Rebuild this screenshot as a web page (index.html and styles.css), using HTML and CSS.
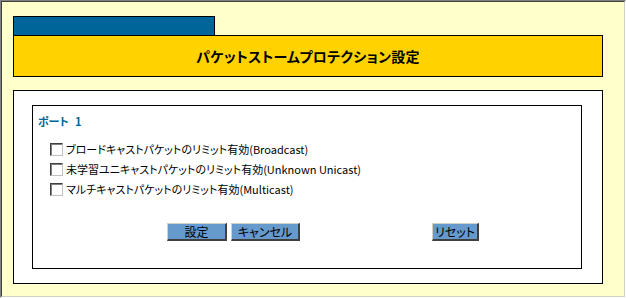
FILE: index.html
```html
<!DOCTYPE html>
<html lang="ja">

<head>
    <meta charset="UTF-8">
    <meta name="viewport" content="width=device-width, initial-scale=1.0">
    <title>パケットストームプロテクション設定</title>
    <link rel="stylesheet" href="styles.css">
</head>

<body>
    <div class="frame">
        <div class="page">
            <div class="tab"></div>
            <div class="header">
                <h1 class="title">パケットストームプロテクション設定</h1>
            </div>
            <form class="outer" id="form">
                <div class="inner">
                    <h3 class="port">ポート 1</h3>
                    <label class="row"><input type="checkbox" class="check" name="broadcast">
                        <span>ブロードキャストパケットのリミット有効(Broadcast)</span></label>
                    <label class="row"><input type="checkbox" class="check" name="unicast">
                        <span>未学習ユニキャストパケットのリミット有効(Unknown Unicast)</span></label>
                    <label class="row"><input type="checkbox" class="check" name="multicast">
                        <span>マルチキャストパケットのリミット有効(Multicast)</span></label>
                    <div class="buttons">
                        <button type="submit" class="btn btn-set">設定</button>
                        <button type="button" class="btn btn-cancel">キャンセル</button>
                        <button type="reset" class="btn btn-reset">リセット</button>
                    </div>
                </div>
            </form>
        </div>
    </div>
</body>

</html>
```

FILE: styles.css
```css
* {
    padding: 0;
    margin: 0;
    box-sizing: border-box;
}

body {
    background: #ffffcc;
    font-family: "Noto Sans CJK JP", "DejaVu Sans", sans-serif;
    font-feature-settings: "palt";
}

.frame {
    height: 298px;
    border-top: 1px solid #808080;
    border-left: 1px solid #808080;
    border-right: 1px solid #ffffff;
    border-bottom: 1px solid #ffffff;
}

.page {
    height: 100%;
    background: #ffffcc;
    border-top: 1px solid #404040;
    border-left: 1px solid #404040;
    border-right: 1px solid #d4d0c8;
    border-bottom: 1px solid #d4d0c8;
    padding: 14px 0 0 11px;
}

.tab {
    width: 202px;
    height: 19px;
    background: #006699;
    border: 1px solid #000;
    border-bottom: none;
}

.header {
    width: 590px;
    height: 42px;
    background: #ffd200;
    border: 1px solid #000;
    display: flex;
    align-items: center;
    justify-content: center;
}

.title {
    font-size: 14px;
    font-weight: bold;
    color: #000;
    line-height: 16px;
    letter-spacing: 0.3px;
}

.outer {
    display: block;
    width: 590px;
    height: 194px;
    margin-top: 13px;
    background: #fff;
    border: 1px solid #000;
    padding: 14px 0 0 18px;
}

.inner {
    width: 550px;
    height: 164px;
    border: 1px solid #000;
    padding: 7px 0 0 5px;
}

.port {
    font-size: 11px;
    font-weight: bold;
    color: #006699;
    line-height: 16px;
    word-spacing: 4px;
    margin-bottom: 10px;
}

.row {
    display: flex;
    align-items: center;
    height: 20px;
    font-size: 11px;
    color: #000;
    padding-left: 12px;
}

.check {
    appearance: none;
    width: 13px;
    height: 13px;
    background: #fff;
    border-top: 1px solid #404040;
    border-left: 1px solid #404040;
    border-right: 1px solid #c0c0c0;
    border-bottom: 1px solid #c0c0c0;
    box-shadow: inset 1px 1px 0 #808080;
    margin-right: 3px;
}

.buttons {
    display: flex;
    margin-top: 24px;
    padding-left: 129px;
}

.btn {
    height: 18px;
    background: #6699cc;
    font-family: "Noto Sans CJK JP", sans-serif;
    font-feature-settings: "palt";
    font-size: 12px;
    line-height: 14px;
    color: #000;
    border-top: 1px solid #d4d0c8;
    border-left: 1px solid #d4d0c8;
    border-right: 2px solid #404040;
    border-bottom: 2px solid #404040;
}

.btn-set {
    width: 60px;
}

.btn-cancel {
    width: 69px;
    margin-left: 4px;
}

.btn-reset {
    width: 47px;
    margin-left: 132px;
}
```
